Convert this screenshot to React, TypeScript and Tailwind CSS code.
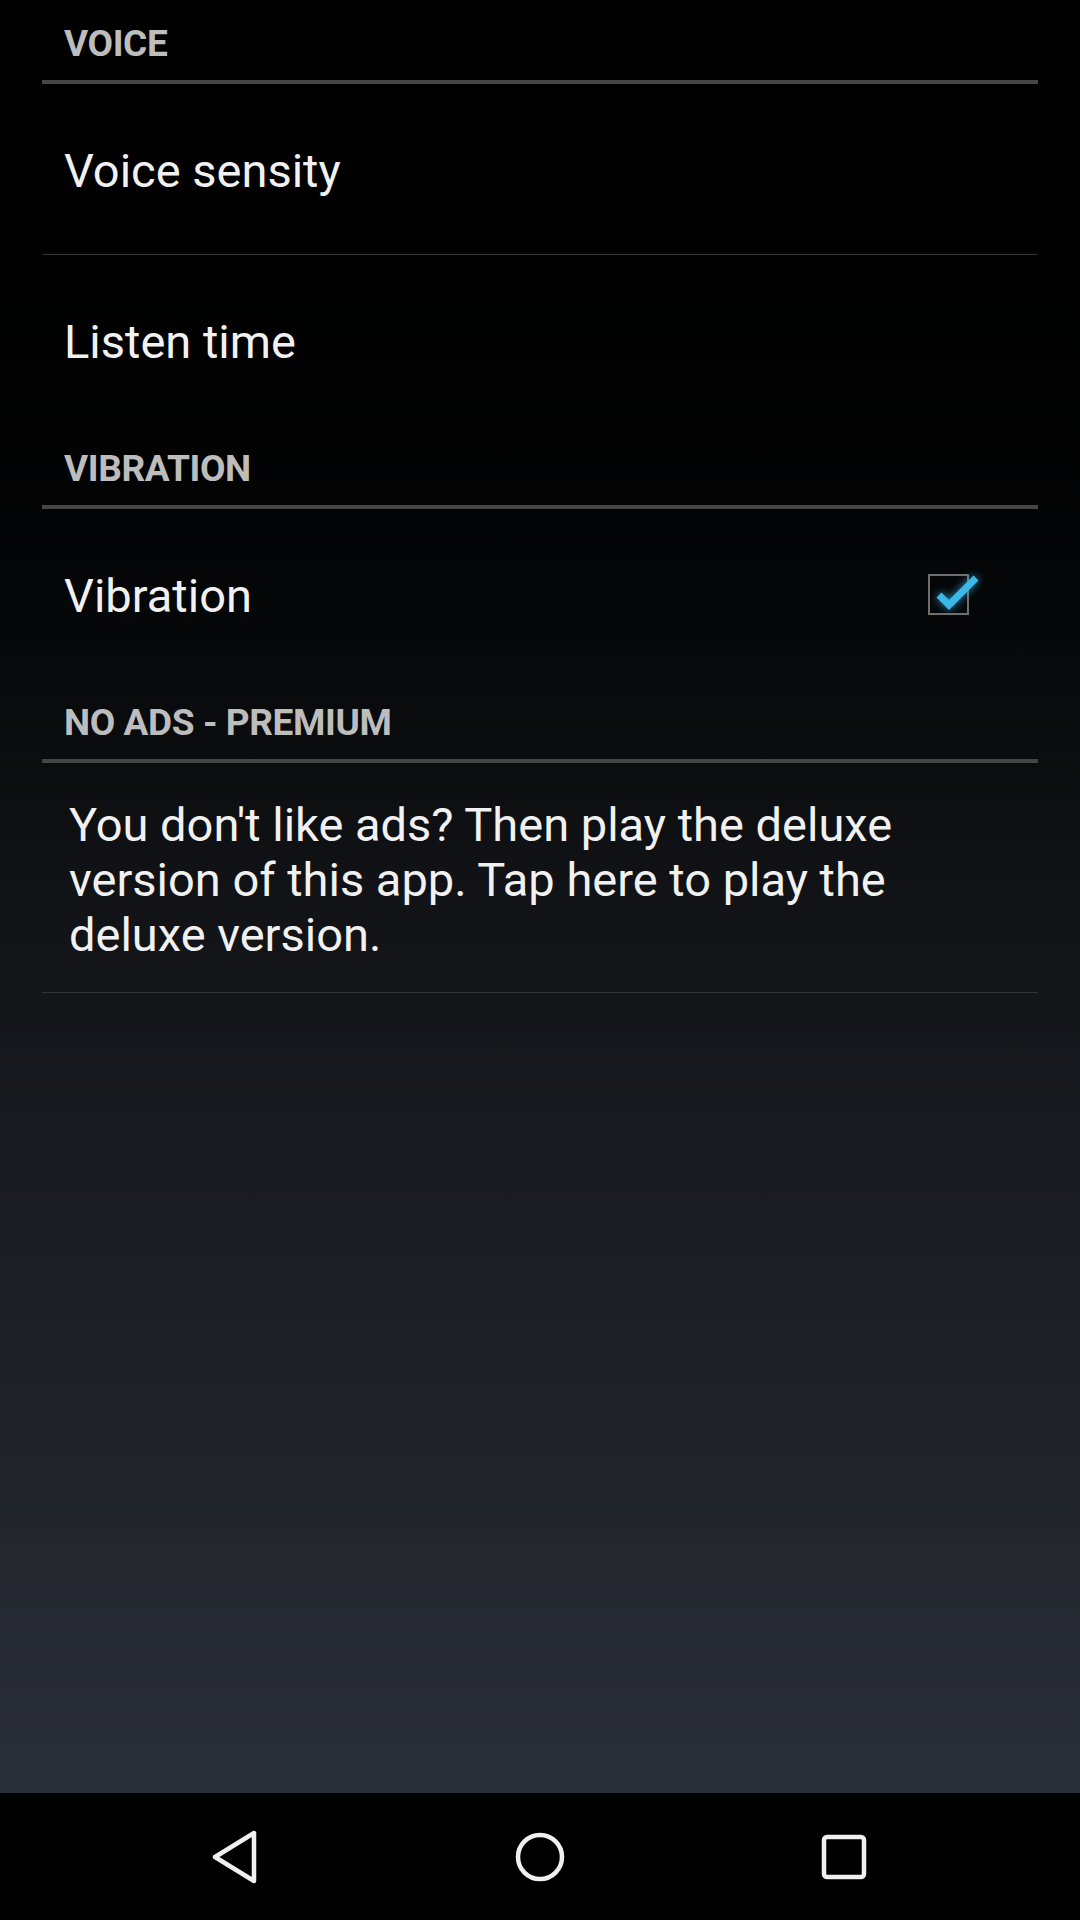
import React from "react";

const font = { fontFamily: "Roboto, 'Noto Sans', sans-serif" };

function Category({ title }: { title: string }) {
  return (
    <div>
      <div className="h-[80px] pt-[8px] pl-[22px] flex items-center text-[37px] font-bold text-[#bdbdbd] tracking-[-0.4px]">
        {title}
      </div>
      <div className="h-[4px] bg-[#464646]" />
    </div>
  );
}

function Row({ title, children }: { title: string; children?: React.ReactNode }) {
  return (
    <div className="h-[170px] pl-[22px] flex items-center text-[47px] text-[#f1f1f1]">
      <span className="pt-[5px]">{title}</span>
      {children}
    </div>
  );
}

function Divider() {
  return <div className="h-[1px] bg-[#34363a]" />;
}

function CheckBox() {
  return (
    <div className="relative ml-auto mr-[69px] w-[41px] h-[41px] border-2 border-[#6e6e6e]">
      <svg
        className="absolute left-[-2px] top-[-10px] overflow-visible"
        width="60"
        height="50"
        viewBox="0 0 60 50"
        style={{ filter: "drop-shadow(0 0 4px rgba(51,181,229,0.8))" }}
      >
        <polyline
          points="11,29 21,39 48,12"
          fill="none"
          stroke="#3bb8ea"
          strokeWidth="7"
          strokeLinejoin="miter"
        />
      </svg>
    </div>
  );
}

export default function App() {
  return (
    <div className="w-[1080px] h-[1920px] flex flex-col" style={font}>
      <div className="flex-1 px-[42px] bg-gradient-to-b from-black via-[#111316] to-[#2a2e37]">
        <Category title="VOICE" />
        <Row title="Voice sensity" />
        <Divider />
        <Row title="Listen time" />

        <Category title="VIBRATION" />
        <Row title="Vibration">
          <CheckBox />
        </Row>

        <Category title="NO ADS - PREMIUM" />
        <div className="pt-[34px] pb-[30px] pl-[27px] pr-[28px] text-[47px] leading-[55px] text-[#f1f1f1]">
          You don't like ads? Then play the deluxe version of this app. Tap here to play the deluxe version.
        </div>
        <Divider />
      </div>

      {/* Navigation bar */}
      <div className="h-[127px] bg-black flex justify-center items-center">
        <div className="w-[304px] flex justify-center">
          <svg width="48" height="54" viewBox="0 0 48 54">
            <polygon
              points="3,27 42,3 42,51"
              fill="none"
              stroke="#f0f0f0"
              strokeWidth="4.5"
              strokeLinejoin="round"
            />
          </svg>
        </div>
        <div className="w-[304px] flex justify-center">
          <svg width="52" height="52" viewBox="0 0 52 52">
            <circle cx="26" cy="26" r="22" fill="none" stroke="#f0f0f0" strokeWidth="4.5" />
          </svg>
        </div>
        <div className="w-[304px] flex justify-center">
          <svg width="48" height="48" viewBox="0 0 48 48">
            <rect x="4" y="4" width="40" height="40" rx="3" fill="none" stroke="#f0f0f0" strokeWidth="4.5" />
          </svg>
        </div>
      </div>
    </div>
  );
}
